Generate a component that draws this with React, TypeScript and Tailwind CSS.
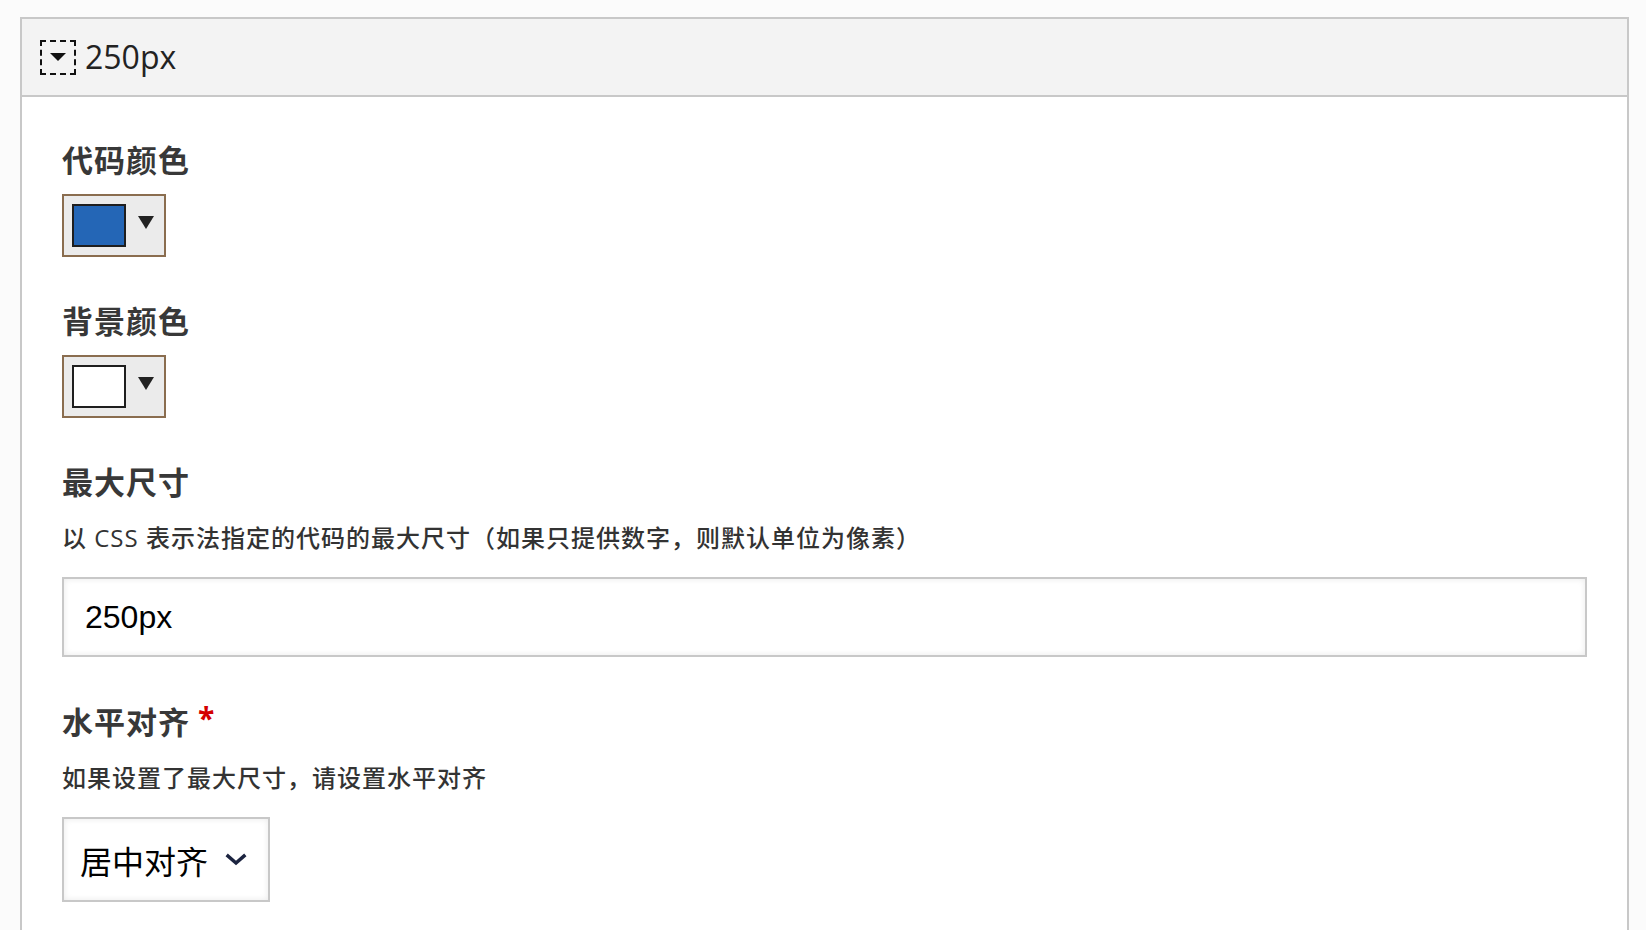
import { useState } from "react";

const SANS = "font-['Open_Sans','Noto_Sans_CJK_SC',sans-serif]";

function ColorPicker(props: { color: string }) {
  return (
    <button
      type="button"
      className="mt-[14px] flex h-[63px] w-[104px] items-center border-2 border-[#8a6d4f] bg-[#ebebeb] pl-[8px]"
    >
      <span
        className="block h-[43px] w-[54px] border-2 border-[#1e1e1e]"
        style={{ backgroundColor: props.color }}
      />
      <svg width="16" height="13" viewBox="0 0 16 13" className="ml-[12px] -mt-[6px]">
        <path d="M0 0h16L8 13z" fill="#222" />
      </svg>
    </button>
  );
}

function Label(props: { children: React.ReactNode; required?: boolean }) {
  return (
    <div className={`flex items-start h-[40px] text-[31px] leading-[40px] font-bold tracking-[1px] text-[#383838] ${SANS}`}>
      {props.children}
      {props.required && (
        <span className="ml-[8px] -mt-[4px] text-[30px] leading-[40px] font-bold text-[#d40000]">*</span>
      )}
    </div>
  );
}

function Description(props: { children: React.ReactNode }) {
  return (
    <div className={`mt-[20px] text-[24px] leading-[32px] font-medium tracking-[1px] text-[#333] ${SANS}`}>
      {props.children}
    </div>
  );
}

export default function App() {
  const [open, setOpen] = useState(true);
  const [size, setSize] = useState("250px");

  return (
    <div className="min-h-[930px] bg-[#fbfbfb] pt-[17px] pl-[20px] pr-[17px]">
      <div className="border-2 border-[#c8c8c8] bg-white">
        {/* summary */}
        <button
          type="button"
          onClick={() => setOpen(!open)}
          className="flex h-[78px] w-full items-center border-b-2 border-[#c8c8c8] bg-[#f3f3f3] pl-[18px] text-left"
        >
          <span className="flex h-[35px] w-[36px] items-center justify-center border-2 border-dashed border-[#111]">
            <svg width="16" height="8" viewBox="0 0 16 8">
              <path d="M0 0h16L8 8z" fill="#111" />
            </svg>
          </span>
          <span className="ml-[9px] font-['Open_Sans',sans-serif] text-[32px] leading-[40px] text-[#222]">
            {size}
          </span>
        </button>

        {open && (
          <div className="px-[40px] pt-[43px] pb-[80px]">
            <Label>代码颜色</Label>
            <ColorPicker color="#2466b6" />

            <div className="mt-[44px]">
              <Label>背景颜色</Label>
              <ColorPicker color="#ffffff" />
            </div>

            <div className="mt-[44px]">
              <Label>最大尺寸</Label>
              <Description>以 CSS 表示法指定的代码的最大尺寸（如果只提供数字，则默认单位为像素）</Description>
              <input
                value={size}
                onChange={(e) => setSize(e.target.value)}
                className="mt-[23px] block h-[80px] w-[1525px] border-2 border-[#c8c8c8] bg-white pl-[21px] font-['Liberation_Sans',Arial,sans-serif] text-[32px] text-black shadow-[inset_0_0_6px_rgba(0,0,0,0.09)] outline-none"
              />
            </div>

            <div className="mt-[45px]">
              <Label required>水平对齐</Label>
              <Description>如果设置了最大尺寸，请设置水平对齐</Description>
              <div className="mt-[23px] flex h-[85px] w-[208px] items-center border-2 border-[#c8c8c8] bg-white pl-[16px] shadow-[inset_0_0_6px_rgba(0,0,0,0.09)]">
                <span className="font-['Noto_Sans_CJK_SC',sans-serif] text-[32px] leading-[40px] text-black">
                  居中对齐
                </span>
                <svg width="22" height="13" viewBox="0 0 22 13" className="ml-[17px]">
                  <path d="M3 3l8 7 8-7" fill="none" stroke="#1c2440" strokeWidth="3.5" strokeLinecap="square" />
                </svg>
              </div>
            </div>
          </div>
        )}
      </div>
    </div>
  );
}
